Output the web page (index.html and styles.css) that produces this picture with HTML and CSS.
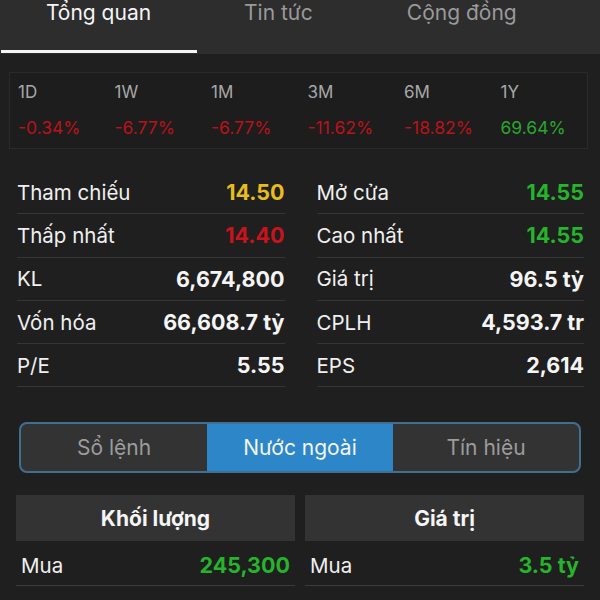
FILE: index.html
```html
<!DOCTYPE html>
<html lang="vi">
<head>
<meta charset="utf-8">
<link rel="stylesheet" href="styles.css">
</head>
<body>
<div class="app">
  <header class="tabbar">
    <nav class="tabs">
      <div class="tab active">Tổng quan</div>
      <div class="tab">Tin tức</div>
      <div class="tab">Cộng đồng</div>
    </nav>
    <div class="indicator"></div>
  </header>

  <section class="periods">
    <div class="period"><span class="plabel">1D</span><span class="pval down">-0.34%</span></div>
    <div class="period"><span class="plabel">1W</span><span class="pval down">-6.77%</span></div>
    <div class="period"><span class="plabel">1M</span><span class="pval down">-6.77%</span></div>
    <div class="period"><span class="plabel">3M</span><span class="pval down">-11.62%</span></div>
    <div class="period"><span class="plabel">6M</span><span class="pval down">-18.82%</span></div>
    <div class="period"><span class="plabel">1Y</span><span class="pval up">69.64%</span></div>
  </section>

  <section class="stats">
    <div class="col">
      <div class="row"><span class="lbl">Tham chiếu</span><span class="val ref">14.50</span></div>
      <div class="row"><span class="lbl">Thấp nhất</span><span class="val low">14.40</span></div>
      <div class="row"><span class="lbl">KL</span><span class="val">6,674,800</span></div>
      <div class="row"><span class="lbl">Vốn hóa</span><span class="val">66,608.7 tỷ</span></div>
      <div class="row"><span class="lbl">P/E</span><span class="val">5.55</span></div>
    </div>
    <div class="col">
      <div class="row"><span class="lbl">Mở cửa</span><span class="val high">14.55</span></div>
      <div class="row"><span class="lbl">Cao nhất</span><span class="val high">14.55</span></div>
      <div class="row"><span class="lbl">Giá trị</span><span class="val">96.5 tỷ</span></div>
      <div class="row"><span class="lbl">CPLH</span><span class="val">4,593.7 tr</span></div>
      <div class="row"><span class="lbl">EPS</span><span class="val">2,614</span></div>
    </div>
  </section>

  <div class="segmented">
    <div class="seg">Sổ lệnh</div>
    <div class="seg active">Nước ngoài</div>
    <div class="seg">Tín hiệu</div>
  </div>

  <section class="foreign">
    <div class="fcol">
      <div class="fhead">Khối lượng</div>
      <div class="frow"><span class="lbl">Mua</span><span class="val high">245,300</span></div>
      <div class="frow"><span class="lbl">Bán</span><span class="val low">258,700</span></div>
    </div>
    <div class="fcol">
      <div class="fhead">Giá trị</div>
      <div class="frow"><span class="lbl">Mua</span><span class="val high">3.5 tỷ</span></div>
      <div class="frow"><span class="lbl">Bán</span><span class="val low">3.7 tỷ</span></div>
    </div>
  </section>
</div>
</body>
</html>
```

FILE: styles.css
```css
* { box-sizing: border-box; }
html, body { margin: 0; padding: 0; }
body {
  background: #1f1f1f;
  font-family: Inter, "Noto Sans", "Liberation Sans", sans-serif;
  color: #f2f2f2;
  width: 600px;
  height: 600px;
  overflow: hidden;
}
.app { width: 600px; }

.tabbar {
  background: #2d2d2d;
  height: 54px;
}
.tabs {
  display: flex;
  height: 50px;
  align-items: flex-start;
}
.tab {
  padding: 0 47px;
  font-size: 21px;
  line-height: 26px;
  color: #9a9a9a;
  white-space: nowrap;
}
.tab.active { color: #f5f5f5; width: 197px; text-align: center; padding: 0; }
.indicator {
  width: 196px;
  height: 3px;
  margin-left: 1px;
  background: #f4f4f4;
}

.periods {
  display: flex;
  margin: 18px 12px 0 9px;
  height: 77px;
  border: 1px solid #2a2a2a;
  background: #1d1d1d;
  padding: 8px 0 0 8px;
  overflow: hidden;
}
.period {
  flex: none;
  width: 96.5px;
  display: flex;
  flex-direction: column;
  gap: 14px;
}
.plabel { font-size: 17px; color: #a8a8a8; line-height: 22px; }
.pval { font-size: 17.5px; line-height: 22px; }
.pval.down { color: #b8121a; }
.pval.up { color: #2aa62e; }

.stats {
  display: flex;
  gap: 32px;
  margin: 22px 16px 0 17px;
}
.col { flex: 1; }
.row {
  display: flex;
  justify-content: space-between;
  align-items: center;
  height: 43.3px;
  border-bottom: 1px solid #363636;
  font-size: 20.5px;
}
.lbl { color: #f0f0f0; }
.val { font-weight: 700; color: #f5f5f5; font-size: 21.5px; }
.val.ref { color: #e6bd1c; }
.val.low { color: #c8141b; }
.val.high { color: #25b42c; }

.segmented {
  display: flex;
  margin: 35px 19px 0 19px;
  height: 51px;
  border: 2px solid #3f6f92;
  border-radius: 8px;
  overflow: hidden;
  background: #333333;
}
.seg {
  flex: 1;
  display: flex;
  align-items: center;
  justify-content: center;
  font-size: 21px;
  color: #9c9c9c;
}
.seg.active { background: #2c86c7; color: #f5f5f5; }

.foreign {
  display: flex;
  gap: 10px;
  margin: 22px 16px 0 16px;
}
.fcol { flex: 1; }
.fhead {
  height: 46px;
  background: #333333;
  display: flex;
  align-items: center;
  justify-content: center;
  font-weight: 700;
  font-size: 21px;
  color: #f5f5f5;
}
.frow {
  display: flex;
  justify-content: space-between;
  align-items: center;
  height: 45px;
  padding: 4px 5px 0 5px;
  border-bottom: 1px solid #3a3a3a;
  font-size: 20.5px;
}
```
